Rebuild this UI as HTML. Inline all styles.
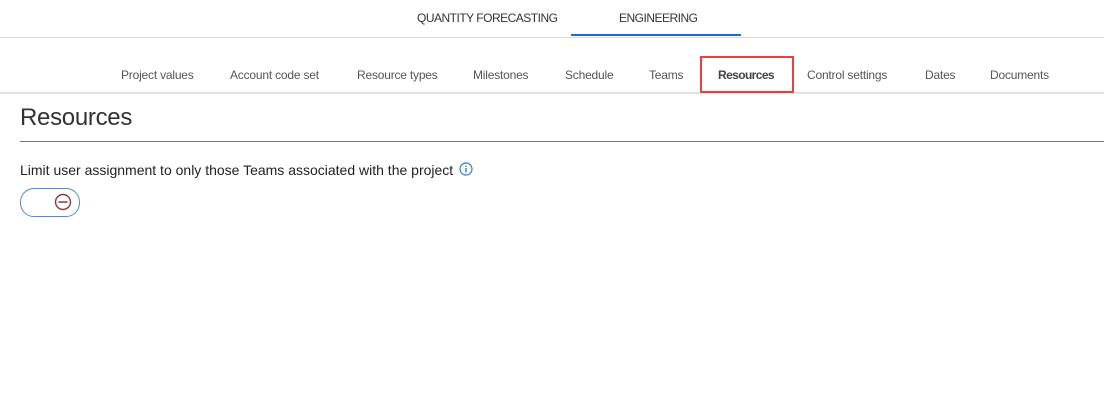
<!DOCTYPE html><html><head><style>
body{margin:0;width:1104px;height:403px;background:#fff;font-family:"Liberation Sans",sans-serif;position:relative;overflow:hidden}
.a{position:absolute;white-space:nowrap}
.t{font-size:12px;color:#333;top:11px;letter-spacing:-0.5px}
.s{font-size:12px;color:#555;top:68px;letter-spacing:-0.2px}
</style></head><body>
<div class="a t" style="left:417px">QUANTITY FORECASTING</div>
<div class="a t" style="left:619px">ENGINEERING</div>
<div class="a" style="left:571px;top:34px;width:170px;height:2px;background:#1a6dcc"></div>
<div class="a" style="left:0;top:37px;width:1104px;height:1px;background:#ddd"></div>
<div class="a s" style="left:121px">Project values</div>
<div class="a s" style="left:230px">Account code set</div>
<div class="a s" style="left:357px">Resource types</div>
<div class="a s" style="left:473px">Milestones</div>
<div class="a s" style="left:565px">Schedule</div>
<div class="a s" style="left:649px">Teams</div>
<div class="a s" style="left:718px;font-weight:bold;color:#444;letter-spacing:-0.6px">Resources</div>
<div class="a s" style="left:807px">Control settings</div>
<div class="a s" style="left:925px">Dates</div>
<div class="a s" style="left:990px">Documents</div>
<div class="a" style="left:0;top:92px;width:1104px;height:2px;background:#e2e2e2"></div>
<div class="a" style="left:700px;top:56px;width:90px;height:33px;border:2px solid #ee3e42"></div>
<div class="a" style="left:20px;top:104px;font-size:24px;color:#333;letter-spacing:-0.3px">Resources</div>
<div class="a" style="left:20px;top:141px;width:1084px;height:1px;background:#777"></div>
<div class="a" style="left:20px;top:162px;font-size:14px;color:#222">Limit user assignment to only those Teams associated with the project</div>
<svg class="a" style="left:459px;top:162px" width="14" height="14" viewBox="0 0 14 14"><circle cx="7" cy="7" r="6" fill="none" stroke="#2b7bd6" stroke-width="1.2"/><rect x="6.3" y="6" width="1.4" height="4.5" fill="#2b7bd6"/><rect x="6.3" y="3.5" width="1.4" height="1.4" fill="#2b7bd6"/></svg>
<div class="a" style="left:20px;top:188px;width:58px;height:27px;border:1px solid #4a8ee0;border-radius:14px"></div>
<svg class="a" style="left:54px;top:193px" width="18" height="18" viewBox="0 0 18 18"><circle cx="9" cy="9" r="7.5" fill="none" stroke="#8a3540" stroke-width="1.4"/><rect x="4.5" y="8.3" width="9" height="1.5" fill="#8a3540"/></svg>
</body></html>
